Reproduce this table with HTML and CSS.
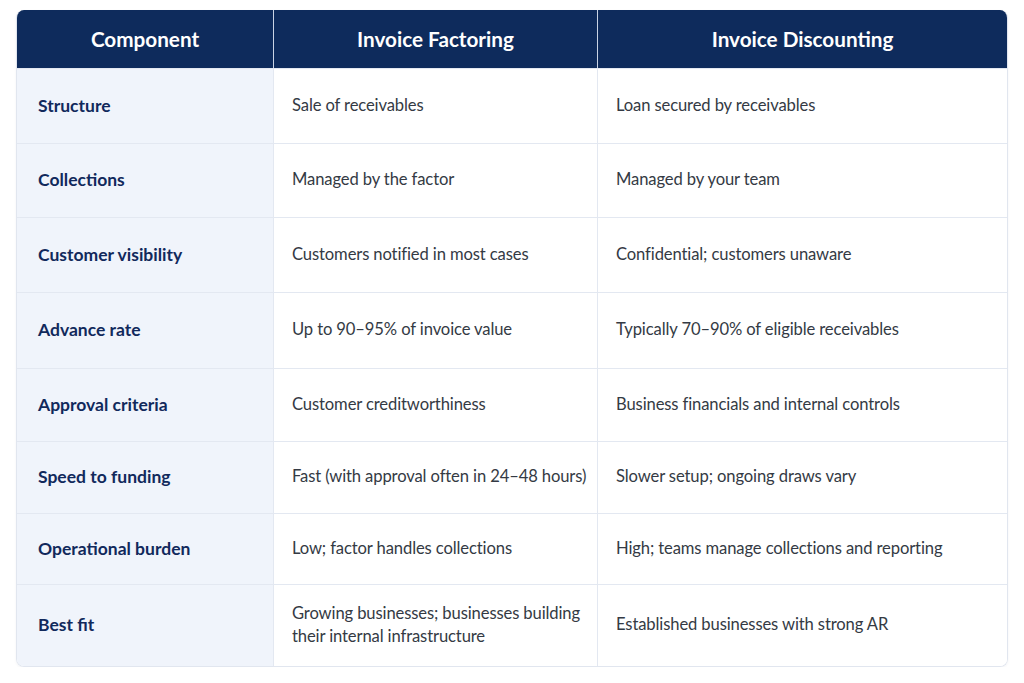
FILE: index.html
```html
<!DOCTYPE html>
<html lang="en">
<head>
<meta charset="utf-8">
<title>Invoice Factoring vs Invoice Discounting</title>
<link rel="stylesheet" href="styles.css">
</head>
<body>
<div class="table">
  <div class="th">Component</div>
  <div class="th">Invoice Factoring</div>
  <div class="th">Invoice Discounting</div>

  <div class="td label">Structure</div>
  <div class="td">Sale of receivables</div>
  <div class="td">Loan secured by receivables</div>

  <div class="td label">Collections</div>
  <div class="td">Managed by the factor</div>
  <div class="td">Managed by your team</div>

  <div class="td label">Customer visibility</div>
  <div class="td">Customers notified in most cases</div>
  <div class="td">Confidential; customers unaware</div>

  <div class="td label">Advance rate</div>
  <div class="td">Up to 90–95% of invoice value</div>
  <div class="td">Typically 70–90% of eligible receivables</div>

  <div class="td label">Approval criteria</div>
  <div class="td">Customer creditworthiness</div>
  <div class="td">Business financials and internal controls</div>

  <div class="td label">Speed to funding</div>
  <div class="td">Fast (with approval often in 24–48 hours)</div>
  <div class="td">Slower setup; ongoing draws vary</div>

  <div class="td label">Operational burden</div>
  <div class="td">Low; factor handles collections</div>
  <div class="td">High; teams manage collections and reporting</div>

  <div class="td label">Best fit</div>
  <div class="td">Growing businesses; businesses building their internal infrastructure</div>
  <div class="td">Established businesses with strong AR</div>
</div>
</body>
</html>
```
FILE: styles.css
```css
html, body {
  margin: 0;
  padding: 0;
  background: #ffffff;
}
body {
  padding: 10px 16px 0 16px;
  font-family: Lato, "Noto Sans", sans-serif;
}
.table {
  width: 992px;
  display: grid;
  grid-template-columns: 256px 324px 410px;
  grid-template-rows: 58px 75px 74px 75px 76px 73px 72px 71px 82px;
  border: 1px solid #e1e6ef;
  border-top: none;
  border-radius: 8px;
  overflow: hidden;
  box-sizing: border-box;
  box-shadow: 0 1px 3px rgba(20, 40, 80, 0.05);
}
.th {
  background: #0e2b5c;
  color: #ffffff;
  font-weight: 700;
  font-size: 20.7px;
  display: flex;
  align-items: center;
  justify-content: center;
  padding-bottom: 1px;
  border-left: 1px solid #c9d3e4;
}
.th:first-child {
  border-left: none;
}
.td {
  display: flex;
  align-items: center;
  padding: 0 6px 2px 18px;
  font-size: 16.6px;
  letter-spacing: -0.12px;
  line-height: 23px;
  color: #343a44;
  border-top: 1px solid #e3e8f1;
  border-left: 1px solid #e3e8f1;
  background: #ffffff;
}
.td.label {
  background: #f0f4fb;
  color: #11295c;
  font-weight: 700;
  font-size: 17.5px;
  letter-spacing: 0;
  padding-left: 21px;
  border-left: none;
}
```
